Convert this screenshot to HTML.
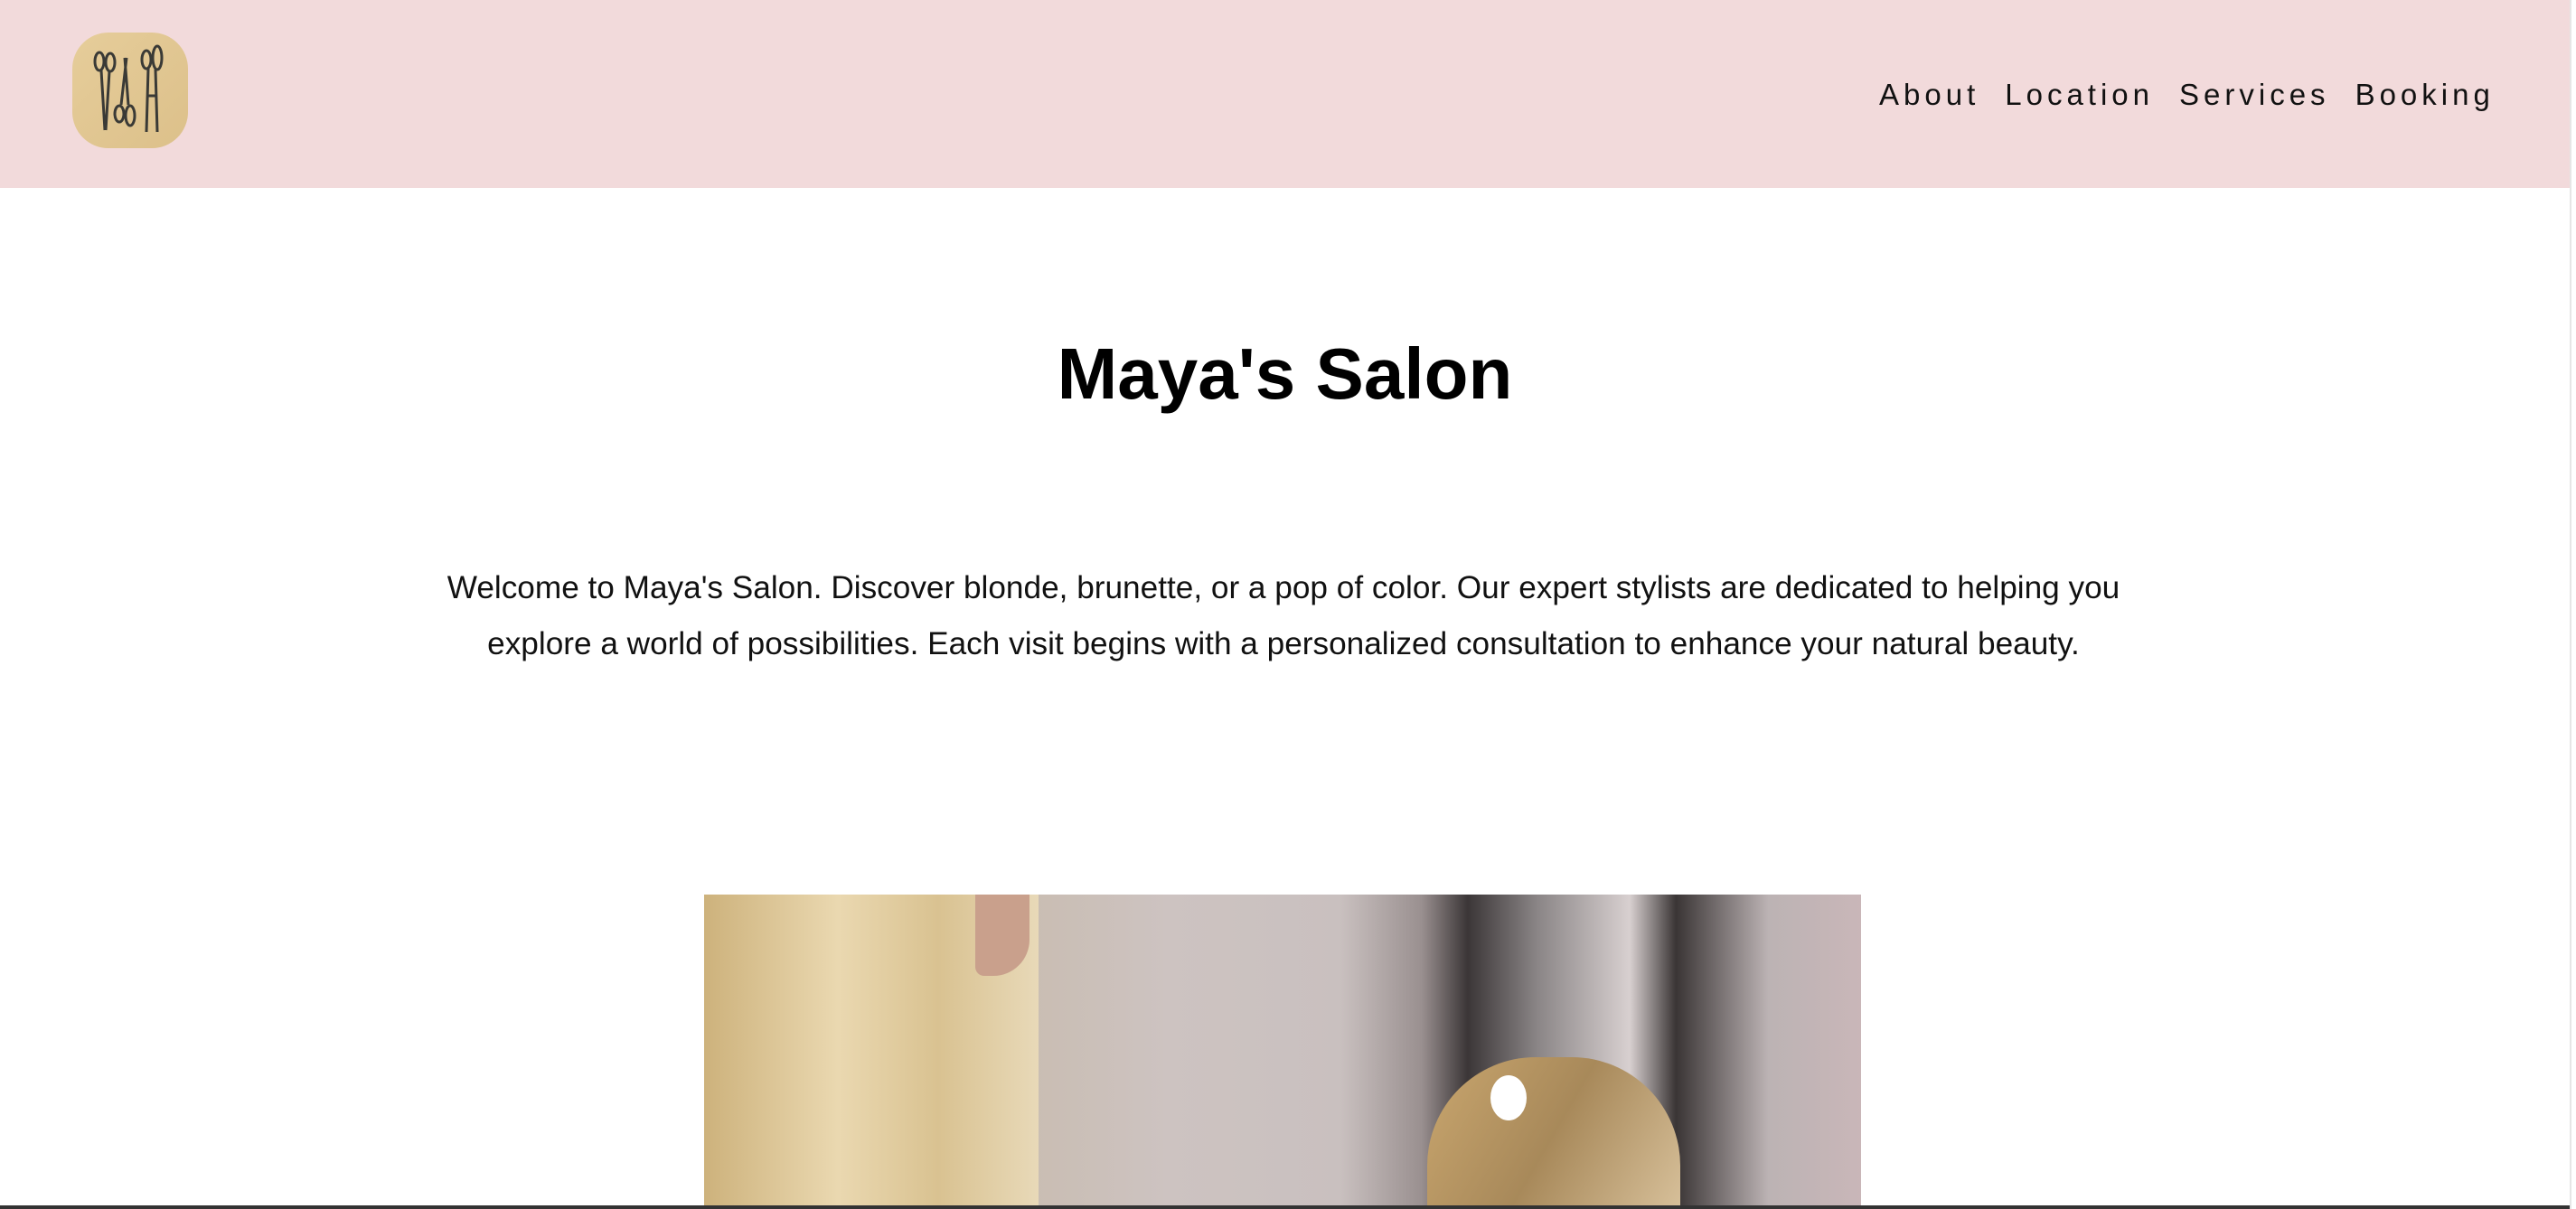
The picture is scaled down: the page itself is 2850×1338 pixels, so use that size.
<!DOCTYPE html>
<html><head><meta charset="utf-8"><style>
html,body{margin:0;padding:0;width:2850px;height:1338px;overflow:hidden;background:#fff;font-family:"Liberation Sans",Arial,sans-serif;}
.hdr{position:absolute;left:0;top:0;width:2843px;height:208px;background:#f2dadb;}
.logo{position:absolute;left:80px;top:36px;width:128px;height:128px;border-radius:40px;background:linear-gradient(135deg,#e6cd9a,#dcc08a);}
.nav{position:absolute;top:86px;left:2079px;font-size:33px;letter-spacing:5px;color:#111;white-space:nowrap;}
.nav span{margin-right:28px;}
h1{position:absolute;top:364px;left:0;width:2843px;margin:0;text-align:center;font-size:80px;font-weight:bold;color:#000;line-height:100px;}
p{position:absolute;top:620px;left:440px;width:1960px;margin:0;text-align:center;font-size:35.2px;line-height:62px;color:#111;}
.img{position:absolute;left:779px;top:990px;width:1280px;height:346px;overflow:hidden;background:linear-gradient(90deg,#d8c08e 0%,#e3d0a8 10%,#d6c29b 22%,#c9bdb2 28%,#cdc3c1 40%,#c9c0bf 55%,#9a9090 62%,#3b3637 66%,#8a8586 72%,#d8d0d0 80%,#3a3535 84%,#bcb3b4 92%,#c9b6b8 100%);}
.edge{position:absolute;left:2843px;top:0;width:7px;height:1338px;background:#fff;border-left:2px solid #e6e6e6;}
.bot{position:absolute;left:0;top:1334px;width:2843px;height:4px;background:#333;}
</style></head><body>
<div class="hdr"><div class="logo">
<svg width="128" height="128" viewBox="0 0 128 128"><g fill="none" stroke="#3a3a36" stroke-width="3">
<ellipse cx="30" cy="32" rx="5" ry="10"/><ellipse cx="42" cy="33" rx="5" ry="10"/>
<path d="M32 42 L36 108 M41 43 L37 108"/>
<ellipse cx="52" cy="90" rx="5" ry="9"/><ellipse cx="64" cy="92" rx="5" ry="11"/>
<path d="M54 80 L60 28 M62 80 L58 28"/>
<ellipse cx="82" cy="30" rx="5" ry="10"/><ellipse cx="94" cy="28" rx="5" ry="13"/>
<path d="M84 40 L82 110 M92 41 L94 110 M84 70 L92 70"/></g></svg>
</div>
<div class="nav"><span>About</span><span>Location</span><span>Services</span>Booking</div></div>
<h1>Maya's Salon</h1>
<p>Welcome to Maya's Salon. Discover blonde, brunette, or a pop of color. Our expert stylists are dedicated to helping you explore a world of possibilities. Each visit begins with a personalized consultation to enhance your natural beauty.</p>
<div class="img">
<div style="position:absolute;left:0;top:0;width:370px;height:346px;background:linear-gradient(90deg,#cdb27c,#ead8b0 40%,#d9c291 70%,#e8d9b8);"></div>
<div style="position:absolute;left:300px;top:0;width:60px;height:90px;background:#c9a08c;border-radius:0 0 40px 10px;"></div>
<div style="position:absolute;left:800px;top:180px;width:280px;height:170px;background:linear-gradient(120deg,#c9a66e,#a8895a,#d7c09a);border-radius:120px 120px 0 0;"></div>
<div style="position:absolute;left:870px;top:200px;width:40px;height:50px;background:#fff;border-radius:50%;"></div>
</div>
<div class="bot"></div>
<div class="edge"></div>
</body></html>
